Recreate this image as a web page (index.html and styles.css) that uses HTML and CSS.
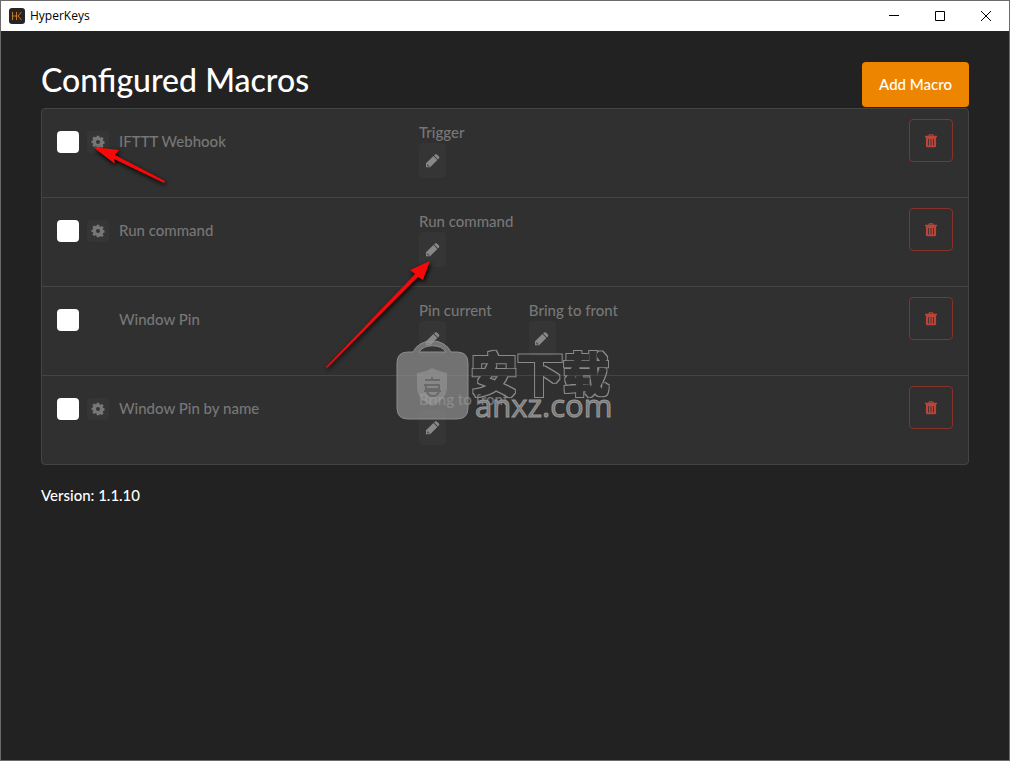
FILE: index.html
```html
<!DOCTYPE html>
<html lang="en">
<head>
<meta charset="utf-8">
<title>HyperKeys</title>
<link rel="stylesheet" href="styles.css">
</head>
<body>
<svg class="defs" aria-hidden="true">
  <symbol id="gear" viewBox="0 0 14 14">
    <path fill-rule="evenodd" d="M5.800 .8h2.400l.35 1.600 1 .4 1.400-.9 1.700 1.700-.9 1.400.4 1 1.350.3v2.400l-1.350.3-.4 1 .9 1.400-1.700 1.700-1.400-.9-1 .4L8.200 13.200H5.800l-.35-1.600-1-.4-1.400.9-1.700-1.700.9-1.400-.4-1L.5 8.200V5.800l1.350-.3.4-1-.9-1.400 1.700-1.700 1.400.9 1-.4zM7 5a2 2 0 1 0 0 4 2 2 0 0 0 0-4z"/>
  </symbol>
  <symbol id="pencil" viewBox="0 0 14 14">
    <path d="M0 13.200V9.300L7.400 2l4 4-7.300 7.200zM8.100 1.400L8.900.6q1-.9 2 0l2 2q.9.900 0 1.900l-.9.900z"/>
    <path class="pencil-tip" d="M1.200 10.400h1.200v1.300h1.200v.8H2l-.8-.8z"/>
  </symbol>
  <symbol id="trash" viewBox="0 0 12 14">
    <path fill-rule="evenodd" d="M3.500 1.700V1.200Q3.500.2 4.500.2h3Q8.500.2 8.500 1.200v.5H12v1.500H0V1.700zM4.700 1.700h2.600v-.5H4.700zM.9 3.200h10.200v8.800q0 1.300-1.300 1.300H2.200q-1.300 0-1.300-1.300zM3.100 5v6.500h.8V5zm2.500 0v6.500h.8V5zM8.100 5v6.500h.8V5z"/>
  </symbol>
  <filter id="outline" x="-5%" y="-10%" width="110%" height="130%">
    <feMorphology in="SourceAlpha" operator="dilate" radius="1" result="inner"/>
    <feMorphology in="SourceGraphic" operator="dilate" radius="2" result="outer"/>
    <feComposite in="outer" in2="inner" operator="out"/>
  </filter>
</svg>

<div class="window">
  <header class="titlebar">
    <svg class="app-icon" viewBox="0 0 16 16" aria-hidden="true">
      <rect width="16" height="16" rx="3"/>
      <path d="M3.500 4v8M7.500 4v8M3.500 8h5M12.500 4L9 8l3.500 4"/>
    </svg>
    <span class="app-title">HyperKeys</span>
    <div class="controls">
      <button class="control" aria-label="Minimize"><svg viewBox="0 0 12 12"><path d="M1 5.500h10"/></svg></button>
      <button class="control" aria-label="Maximize"><svg viewBox="0 0 12 12"><path d="M1.500 1.500h9v9h-9z"/></svg></button>
      <button class="control" aria-label="Close"><svg viewBox="0 0 12 12"><path d="M1 1l10 10M11 1L1 11"/></svg></button>
    </div>
  </header>

  <main class="content">
    <div class="heading">
      <h1 class="title">Configured Macros</h1>
      <button class="add">Add Macro</button>
    </div>

    <ul class="macros">
      <li class="macro">
        <input class="check" type="checkbox" id="m1">
        <span class="config-slot"><button class="config" aria-label="Configure"><svg><use href="#gear"/></svg></button></span>
        <label class="name" for="m1">IFTTT Webhook</label>
        <div class="actions">
          <div class="action"><span>Trigger</span><button class="edit" aria-label="Edit Trigger"><svg><use href="#pencil"/></svg></button></div>
        </div>
        <button class="delete" aria-label="Delete"><svg><use href="#trash"/></svg></button>
      </li>
      <li class="macro">
        <input class="check" type="checkbox" id="m2">
        <span class="config-slot"><button class="config" aria-label="Configure"><svg><use href="#gear"/></svg></button></span>
        <label class="name" for="m2">Run command</label>
        <div class="actions">
          <div class="action"><span>Run command</span><button class="edit" aria-label="Edit Run command"><svg><use href="#pencil"/></svg></button></div>
        </div>
        <button class="delete" aria-label="Delete"><svg><use href="#trash"/></svg></button>
      </li>
      <li class="macro">
        <input class="check" type="checkbox" id="m3">
        <span class="config-slot"></span>
        <label class="name" for="m3">Window Pin</label>
        <div class="actions">
          <div class="action"><span>Pin current</span><button class="edit" aria-label="Edit Pin current"><svg><use href="#pencil"/></svg></button></div>
          <div class="action"><span>Bring to front</span><button class="edit" aria-label="Edit Bring to front"><svg><use href="#pencil"/></svg></button></div>
        </div>
        <button class="delete" aria-label="Delete"><svg><use href="#trash"/></svg></button>
      </li>
      <li class="macro">
        <input class="check" type="checkbox" id="m4">
        <span class="config-slot"><button class="config" aria-label="Configure"><svg><use href="#gear"/></svg></button></span>
        <label class="name" for="m4">Window Pin by name</label>
        <div class="actions">
          <div class="action"><span>Bring to front</span><button class="edit" aria-label="Edit Bring to front"><svg><use href="#pencil"/></svg></button></div>
        </div>
        <button class="delete" aria-label="Delete"><svg><use href="#trash"/></svg></button>
      </li>
    </ul>
    <p class="version">Version: 1.1.10</p>
  </main>
</div>

<svg class="arrow arrow-config" viewBox="0 0 80 46" aria-hidden="true">
  <path d="M3 2L29 5l-4 5L75 36l-1 2L24 14l1 5z"/>
</svg>
<svg class="arrow arrow-edit" viewBox="0 0 116 118" aria-hidden="true">
  <path d="M109 5l-7 19-5-3L6 112l-1-1L94 18l-5-4z"/>
</svg>

<svg class="watermark" viewBox="0 0 220 90" aria-hidden="true">
  <path class="bag" d="M12 16h5a20.500 18 0 0 1 38 0h6q11 0 11 11v45q0 11-11 11H12Q1 83 1 72V27Q1 16 12 16zM23 16h27a15 11 0 0 0-27 0z"/>
  <path class="shield" d="M21 37q9-1 15-5 8 4 15 5v14q0 12-15 19-15-7-15-19z"/>
  <path class="bell" d="M29 44h15M36 41v3M28 49h16M30 49v4h13v-4M28 55h17M31 55q1 5 6 5t6-5"/>
  <text class="mark-cn" x="75" y="55">安下载</text>
  <text class="mark-url" x="79" y="81">anxz.com</text>
</svg>
</body>
</html>
```
FILE: styles.css
```css
* { box-sizing: border-box; }

body {
  margin: 0;
  background: #222;
  color: #fff;
  font: 500 15px/24px Lato, "Liberation Sans", sans-serif;
}

button { font: inherit; padding: 0; cursor: pointer; }

.defs { position: absolute; width: 0; height: 0; }

.window {
  display: flex;
  flex-direction: column;
  min-height: 100vh;
  border: 1px solid #6b6b6b;
}

.titlebar {
  display: flex;
  align-items: center;
  height: 30px;
  padding-left: 8px;
  background: #fff;
  color: #000;
}

.app-icon { width: 16px; height: 16px; fill: #262424; }
.app-icon path { fill: none; stroke: #c47a22; stroke-width: 1; }
.app-title { margin-left: 5px; font: 12px/16px "Open Sans", sans-serif; }

.controls { display: flex; margin-left: auto; }
.control {
  display: grid;
  place-items: center;
  width: 46px;
  height: 30px;
  border: 0;
  background: none;
}
.control svg { width: 12px; height: 12px; fill: none; stroke: #000; }

.content { padding: 31px 40px; }

.heading { display: flex; justify-content: space-between; }
.title { margin: 0; font-size: 32px; line-height: 36px; font-weight: 500; }
.add {
  height: 45px;
  padding: 0 17px 2px;
  border: 0;
  border-radius: 4px;
  background: #ee8501;
  color: #fff;
}

.macros {
  margin: 1px 0 0;
  padding: 0;
  list-style: none;
  border: 1px solid #444;
  border-radius: 4px;
  background: #303030;
}
.macro {
  display: flex;
  align-items: flex-start;
  height: 89px;
  padding: 10px 15px;
  color: #777;
}
.macro + .macro { border-top: 1px solid #444; }
.macro:first-child { height: 88px; }

.check {
  appearance: none;
  flex: none;
  width: 22px;
  height: 22px;
  margin: 12px 8px 0 0;
  border-radius: 4px;
  background: #fff;
}
.check:checked { background: #ee8501; }
.config-slot { flex: none; width: 22px; margin: 12px 10px 0 0; }
.config {
  display: grid;
  place-items: center;
  width: 22px;
  height: 22px;
  border: 0;
  border-radius: 3px;
  background: #353535;
}
.config svg { width: 14px; height: 14px; fill: #777; }
.name { flex: none; width: 300px; margin-top: 10px; }

.actions { display: flex; flex: 1; gap: 37px; }
.action { display: flex; flex-direction: column; align-items: flex-start; padding-top: 1px; }
.edit {
  display: grid;
  place-items: center;
  width: 27px;
  height: 35px;
  margin-top: -1px;
  border: 0;
  border-radius: 4px;
  background: #353535;
}
.edit svg { width: 14px; height: 14px; fill: #888; }
.pencil-tip { fill: #444; }

.delete {
  display: grid;
  place-items: center;
  flex: none;
  width: 44px;
  height: 43px;
  border: 1px solid #86322a;
  border-radius: 4px;
  background: none;
}
.delete svg { width: 12px; height: 14px; fill: #b8443a; }

.version { margin: 18px 0 0; }

.arrow {
  position: absolute;
  fill: #f80808;
  filter: drop-shadow(1px 2px 2px #000);
  pointer-events: none;
}
.arrow-config { left: 90px; top: 145px; width: 80px; height: 46px; }
.arrow-edit { left: 321px; top: 256px; width: 116px; height: 118px; }

.watermark {
  position: absolute;
  left: 396px;
  top: 336px;
  width: 220px;
  height: 90px;
  pointer-events: none;
}
.bag { fill: rgba(150, 150, 150, .65); stroke: #8c8c8c; fill-rule: evenodd; }
.shield { fill: rgba(165, 165, 165, .45); }
.bell { fill: none; stroke: #6a6a6a; stroke-width: 2; }
.mark-cn {
  font: 700 46px "Noto Sans CJK SC", sans-serif;
  fill: #8a8a8a;
  filter: url(#outline);
}
.mark-url {
  font: 400 31px "Open Sans", sans-serif;
  fill: #777;
  stroke: #999;
  stroke-width: 1;
}
```
